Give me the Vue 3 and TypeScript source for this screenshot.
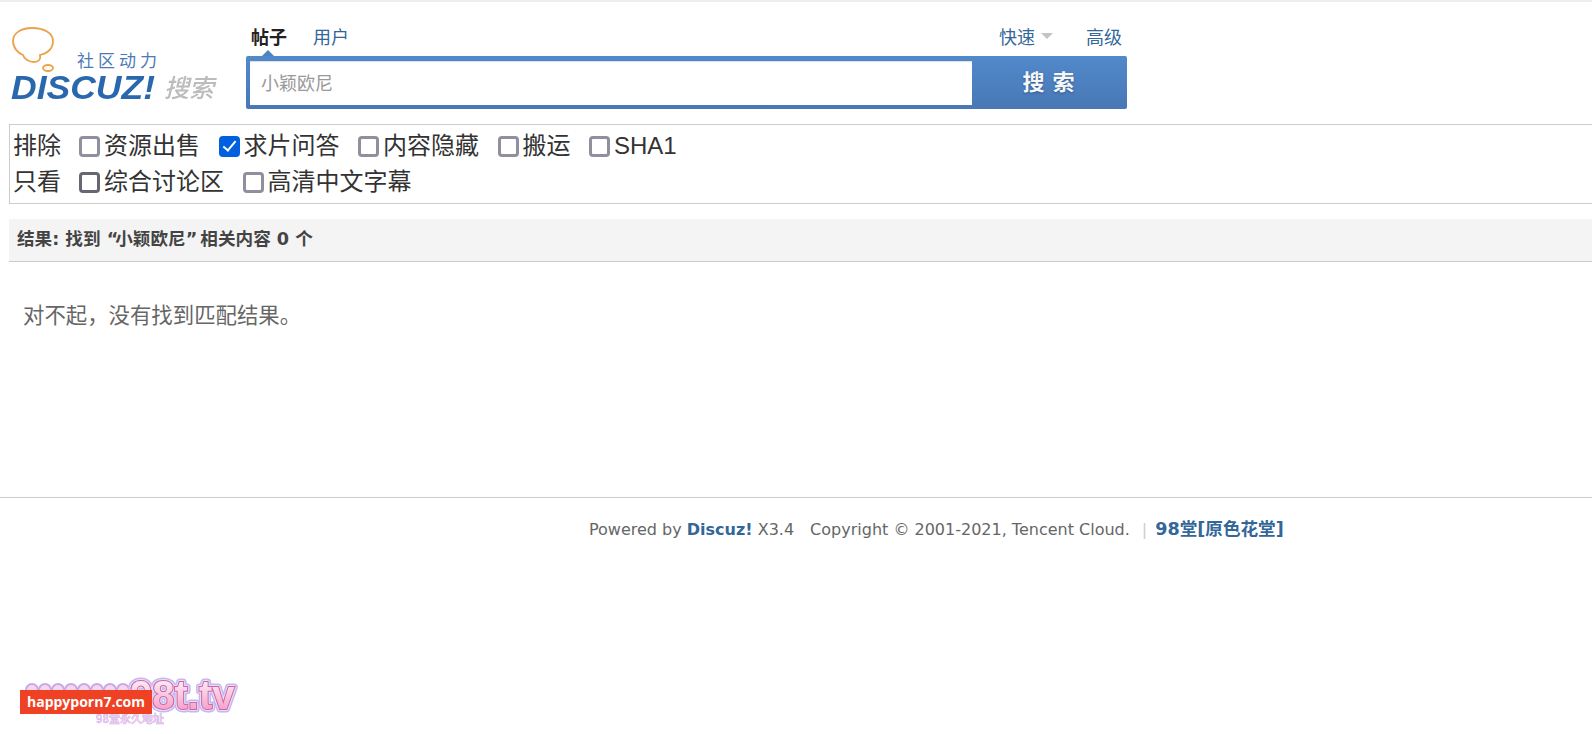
<script setup lang="ts">
interface Option { label: string; checked?: boolean; dark?: boolean }
const excludes: Option[] = [
  { label: '资源出售' },
  { label: '求片问答', checked: true },
  { label: '内容隐藏' },
  { label: '搬运' },
  { label: 'SHA1' },
]
const only: Option[] = [
  { label: '综合讨论区', dark: true },
  { label: '高清中文字幕' },
]
const blobs: number[] = [0, 1, 2, 3, 4, 5, 6, 7].map((i) => 12 + i * 13)
</script>

<template>
  <div class="page">
    <header class="head">
      <svg class="logo" width="236" height="82" viewBox="0 0 236 82" aria-label="Discuz! 搜索">
        <path d="M22 1C10 1 3 7 3 14C3 21 8 26 13 28C14 32 19 35 24 35C29 35 31 32 30 28C38 26 43 21 43 14C43 6 34 1 22 1Z" fill="none" stroke="#eba24a" stroke-width="1.800" />
        <ellipse cx="38" cy="41" rx="5" ry="3" fill="none" stroke="#eba24a" stroke-width="1.800" />
        <text class="logo-slogan" x="67" y="40">社区动力</text>
        <text class="logo-brand" x="1" y="72" textLength="144" lengthAdjust="spacingAndGlyphs">DISCUZ!</text>
        <text class="logo-search" x="154" y="70">搜索</text>
      </svg>
      <div class="search">
        <nav class="tabs">
          <a class="tab active">帖子</a>
          <a class="tab">用户</a>
          <span class="spacer"></span>
          <a class="tab quick">快速<i class="caret"></i></a>
          <a class="tab">高级</a>
        </nav>
        <form class="box" @submit.prevent>
          <input class="input" type="text" placeholder="小颖欧尼" />
          <button class="go" type="button">搜索</button>
        </form>
      </div>
    </header>

    <section class="filters">
      <div class="row">
        <span class="row-title">排除</span>
        <label v-for="o in excludes" :key="o.label" class="opt">
          <input type="checkbox" :checked="o.checked" /><span>{{ o.label }}</span>
        </label>
      </div>
      <div class="row">
        <span class="row-title">只看</span>
        <label v-for="o in only" :key="o.label" class="opt">
          <input type="checkbox" :class="{ dark: o.dark }" /><span>{{ o.label }}</span>
        </label>
      </div>
    </section>

    <h2 class="result-bar">结果: 找到 <span class="q">“</span>小颖欧尼<span class="q">”</span> 相关内容 0 个</h2>
    <p class="empty">对不起，没有找到匹配结果。</p>

    <footer class="foot">
      <span>Powered by <a class="strong">Discuz!</a> X3.4</span>
      <span class="copy">Copyright © 2001-2021, Tencent Cloud.</span>
      <span class="pipe">|</span>
      <a class="strong site">98堂[原色花堂]</a>
    </footer>

    <div class="mark">
      <svg width="240" height="62" viewBox="0 0 240 62">
        <defs>
          <linearGradient id="markFill" x1="0" y1="0" x2="0" y2="1">
            <stop offset="0" stop-color="#ffffff" />
            <stop offset="1" stop-color="#f48fc2" />
          </linearGradient>
        </defs>
        <rect v-for="x in blobs" :key="x" class="m-blob" :x="x - 6" y="14" width="12" height="14" rx="6" />
        <text class="m-big m-halo" x="110" y="39">98t.tv</text>
        <text class="m-big m-rim" x="110" y="39">98t.tv</text>
        <text class="m-big m-face" x="110" y="39" fill="url(#markFill)">98t.tv</text>
        <text class="m-sub" x="76" y="53">98堂永久地址</text>
      </svg>
      <span class="m-label">happyporn7.com</span>
    </div>
  </div>
</template>

<style scoped>
.page {
  border-top: 2px solid #eee;
  font-family: "Noto Sans CJK SC", "Noto Sans", sans-serif;
  color: #333;
  position: relative;
}
.head {
  display: flex;
  padding-left: 10px;
}
.logo {
  margin-top: 25px;
  flex: none;
}
.logo-slogan {
  font: 17px "Noto Sans CJK SC", sans-serif;
  letter-spacing: 4px;
  fill: #4b7ab5;
}
.logo-brand {
  font: italic bold 33px "Liberation Sans", sans-serif;
  fill: #2a68ae;
  filter: blur(.3px);
}
.logo-search {
  font: italic 500 25px "Noto Sans CJK SC", sans-serif;
  fill: #bcbcbc;
  filter: blur(.4px);
}
.search {
  width: 881px;
}
.tabs {
  display: flex;
  height: 54px;
  padding: 21px 5px 0 5px;
  box-sizing: border-box;
  gap: 26px;
}
.tab {
  font-size: 18px;
  line-height: 26px;
  height: 26px;
  color: #369;
}
.tab.active {
  color: #222;
  font-weight: 700;
  position: relative;
}
.tab.active::after {
  content: "";
  position: absolute;
  left: 11px;
  top: 27px;
  border: 6px solid transparent;
  border-top: 0;
  border-bottom-color: #4c83c5;
}
.spacer {
  flex: 1;
}
.quick {
  margin-right: 7px;
  display: flex;
  align-items: center;
  gap: 6px;
}
.caret {
  border: 6px solid transparent;
  border-bottom: 0;
  border-top-color: #c4c4c4;
}
.box {
  display: flex;
  height: 53px;
  box-sizing: border-box;
  padding: 5px 0 4px 4px;
  border-radius: 2px;
  background: linear-gradient(#5189cb, #4878b5);
}
.input {
  width: 722px;
  border: 0;
  outline: 0;
  box-sizing: border-box;
  padding: 0 11px 3px;
  font: 18px "Noto Sans CJK SC", sans-serif;
  color: #333;
  background: #fff;
  box-shadow: inset 0 1px 1px #ddd;
}
.input::placeholder {
  color: #999;
  opacity: 1;
}
.go {
  flex: 1;
  border: 0;
  padding: 0 2px 6px 0;
  background: none;
  color: #f4f6f9;
  font: 700 22px "Noto Sans CJK SC", sans-serif;
  letter-spacing: 8px;
  text-indent: 8px;
  text-shadow: 0 1px 2px #2f5587;
}
.filters {
  margin: 15px 0 0 9px;
  padding: 3px;
  border: 1px solid #ccc;
  border-right: 0;
  font: 24px "Liberation Sans", "Noto Sans CJK SC", sans-serif;
  color: #333;
}
.row {
  display: flex;
  height: 36px;
  align-items: center;
  line-height: 36px;
}
.row-title {
  margin-right: 18px;
}
.opt {
  display: flex;
  align-items: center;
  margin-right: 18.500px;
}
.opt input {
  appearance: none;
  width: 21px;
  height: 21px;
  margin: 0 4px 0 0;
  box-sizing: border-box;
  border: 3px solid #8f8f9d;
  border-radius: 4px;
  background: #fff;
  display: grid;
  place-items: center;
}
.opt input.dark {
  border-color: #676774;
}
.opt input:checked {
  border-color: #0060df;
  background: #0060df;
}
.opt input:checked::after {
  content: "";
  width: 5px;
  height: 11px;
  margin-top: -3px;
  border: solid #fff;
  border-width: 0 2.5px 2.5px 0;
  transform: rotate(40deg);
}
.result-bar {
  margin: 15px 0 0 9px;
  height: 43px;
  box-sizing: border-box;
  padding-left: 8px;
  border-bottom: 1px solid #ccc;
  background: #f4f4f4;
  font-family: "DejaVu Sans", "Noto Sans CJK SC", sans-serif;
  font-size: 17.6px;
  font-weight: 700;
  line-height: 41px;
  color: #444;
}
.q {
  letter-spacing: -3px;
}
.empty {
  margin: 0;
  height: 235px;
  box-sizing: border-box;
  padding: 38px 0 0 23px;
  font-size: 21.4px;
  line-height: 28px;
  color: #666;
}
.foot {
  border-top: 1px solid #ccc;
  padding: 18px 0 0 589px;
  font-family: "DejaVu Sans", "Noto Sans CJK SC", sans-serif;
  font-size: 16px;
  line-height: 26px;
  color: #666;
  white-space: nowrap;
}
.strong {
  color: #369;
  font-weight: 700;
}
.site {
  font-size: 17.6px;
}
.copy {
  margin-left: 16px;
}
.pipe {
  margin: 0 8px 0 12px;
  color: #ccc;
}
.mark {
  position: fixed;
  left: 20px;
  top: 670px;
  width: 240px;
  height: 62px;
}
.m-blob {
  fill: #f7d5ea;
  stroke: #c7a8e8;
  stroke-width: 2;
}
.m-big {
  font: 700 40px "Liberation Sans", sans-serif;
}
.m-halo {
  fill: none;
  stroke: #cbb6ee;
  stroke-width: 7;
  stroke-linejoin: round;
}
.m-rim {
  fill: none;
  stroke: #d9e4ff;
  stroke-width: 4;
  stroke-linejoin: round;
}
.m-face {
  stroke: #d9609f;
  stroke-width: 2;
  paint-order: stroke;
}
.m-sub {
  font: 700 11px "Noto Sans CJK SC", sans-serif;
  fill: #f3d3ec;
  stroke: #c7a8e8;
  stroke-width: .4;
}
.m-label {
  position: absolute;
  left: 0;
  top: 20px;
  width: 132px;
  height: 24px;
  background: #ef4123;
  color: #fff;
  font: 700 14px/24px "Open Sans", sans-serif;
  text-align: center;
  white-space: nowrap;
}
</style>
